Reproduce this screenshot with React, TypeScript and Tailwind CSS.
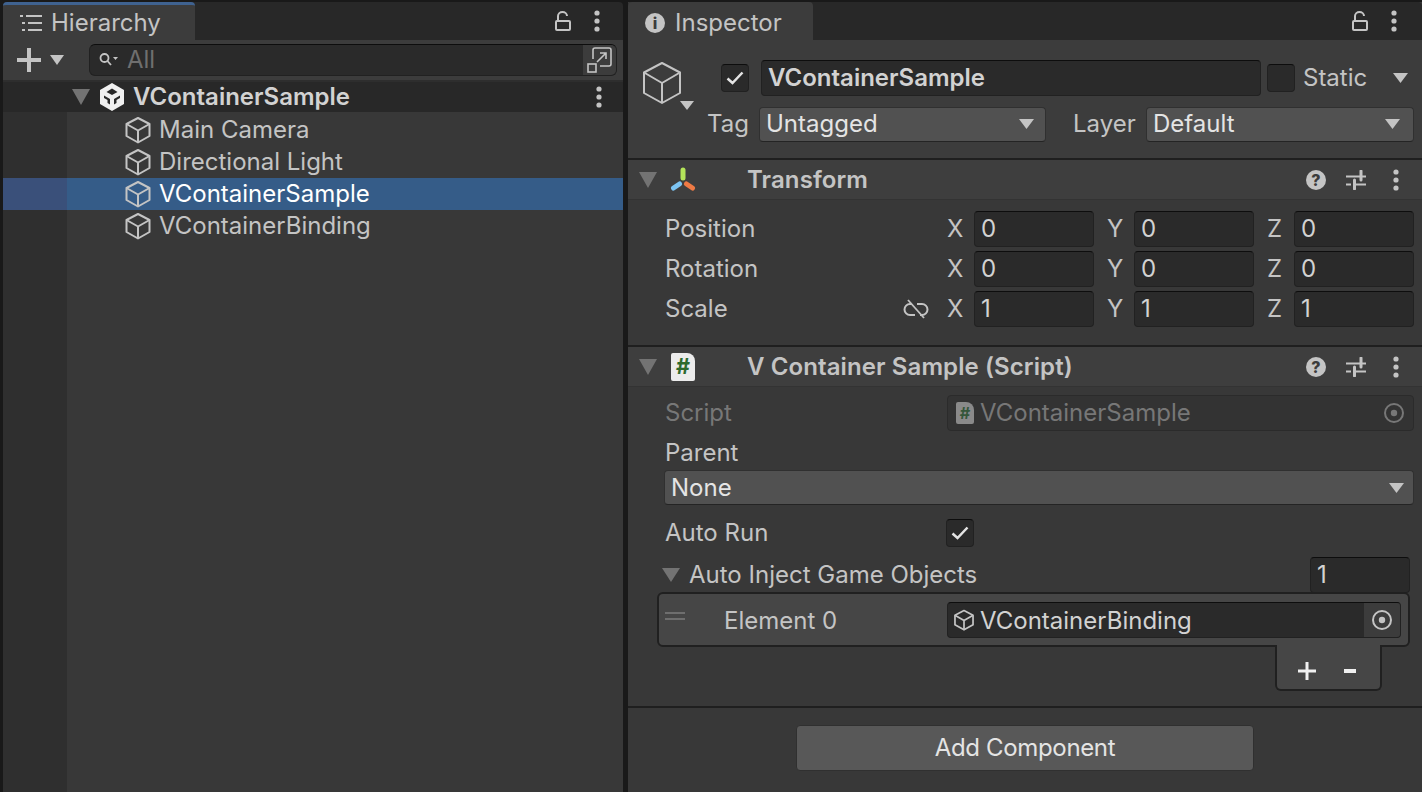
const Triangle = ({ className }: { className: string }) => (
  <svg viewBox="0 0 18 16" preserveAspectRatio="none" className={className}>
    <path d="M0 0H18L9 16Z" fill="currentColor" />
  </svg>
);

const Cube = ({ size = 28, sw = 2 }: { size?: number; sw?: number }) => (
  <svg width={size} height={size} viewBox="0 0 28 28" fill="none" stroke="#c4c4c4" strokeWidth={sw} strokeLinejoin="round" className="shrink-0">
    <path d="M14 2 25.500 8v12L14 26.500 2.500 20V8Z" />
    <path d="M2.500 8 14 14.500 25.500 8M14 14.500V26.500" />
  </svg>
);

const Kebab = () => (
  <svg width="6" height="22" viewBox="0 0 6 22" fill="#c4c4c4" className="shrink-0">
    <circle cx="3" cy="3" r="2.600" />
    <circle cx="3" cy="11" r="2.600" />
    <circle cx="3" cy="19" r="2.600" />
  </svg>
);

const Lock = () => (
  <svg width="16" height="20" viewBox="0 0 16 20" fill="none" stroke="#c4c4c4" strokeWidth="2" className="shrink-0">
    <rect x="1" y="10" width="14" height="9" rx="1" />
    <path d="M3 10V5a4.500 4 0 0 1 9 0" />
  </svg>
);

const Help = () => (
  <div className="w-5 h-5 rounded-full bg-[#c4c4c4] text-[#3c3c3c] text-[16px] font-extrabold leading-5 text-center shrink-0">?</div>
);

const Sliders = () => (
  <svg width="20" height="20" viewBox="0 0 20 20" stroke="#c4c4c4" className="shrink-0">
    <path d="M0 6.500H20M0 14.500H5M8 14.500H20" strokeWidth="2" />
    <path d="M15 1V10M8.500 10V19" strokeWidth="3" strokeLinecap="round" />
  </svg>
);

const Target = ({ size = 20, color = "#c4c4c4" }: { size?: number; color?: string }) => (
  <svg width={size} height={size} viewBox="0 0 20 20" fill="none" className="shrink-0">
    <circle cx="10" cy="10" r="9" stroke={color} strokeWidth="2" />
    <circle cx="10" cy="10" r="3.200" fill={color} />
  </svg>
);

const ScriptIcon = ({ size = 24, dim = false }: { size?: number; dim?: boolean }) => (
  <div
    className={`flex items-center justify-center shrink-0 rounded-br-[2px] rounded-l-[2px] rounded-tr-[8px] font-bold ${dim ? "bg-[#8a8a8a] text-[#35573a]" : "bg-[#ececec] text-[#2d6a2e]"}`}
    style={{ width: size, height: size + 4, fontSize: size * 0.9 }}
  >
    #
  </div>
);

const Check = () => (
  <svg width="18" height="14" viewBox="0 0 18 14" fill="none" stroke="#e4e4e4" strokeWidth="2.500">
    <path d="M1.500 7.500 6.500 12 16.500 1.500" />
  </svg>
);

const Field = ({ children, className = "" }: { children?: React.ReactNode; className?: string }) => (
  <div className={`flex items-center bg-[#2a2a2a] border border-[#212121] border-t-[#0d0d0d] rounded-[4px] text-[#d2d2d2] ${className}`}>
    {children}
  </div>
);

const Dropdown = ({ value, className = "" }: { value: string; className?: string }) => (
  <div className={`flex items-center justify-between bg-[#515151] border border-[#303030] border-b-[#242424] rounded-[4px] pl-[6px] text-[#e4e4e4] ${className}`}>
    <span>{value}</span>
    <Triangle className="w-[15px] h-[10px] text-[#c4c4c4]" />
  </div>
);

const Axis = ({ name, value }: { name: string; value: string }) => (
  <div className="flex items-center">
    <span className="w-[28px] pl-[1px] text-[#c4c4c4]">{name}</span>
    <Field className="w-[120px] h-[36px] pl-[6px]">{value}</Field>
  </div>
);

const VectorRow = ({ label, value, unlink }: { label: string; value: string; unlink?: boolean }) => (
  <div className="flex items-center h-[40px] pl-[37px] pr-[8px]">
    <span className="flex-1 text-[#c4c4c4]">{label}</span>
    {unlink && (
      <svg width="26" height="20" viewBox="0 0 26 20" fill="none" stroke="#c4c4c4" strokeWidth="2" className="mr-[17px]">
        <path d="M9 5H7a4.500 4.500 0 0 0 0 11h5M14 5h5a4.500 4.500 0 0 1 0 11h-2" />
        <path d="M5 1l16 18" strokeWidth="1.800" />
      </svg>
    )}
    <div className="flex gap-[12px]">
      <Axis name="X" value={value} />
      <Axis name="Y" value={value} />
      <Axis name="Z" value={value} />
    </div>
  </div>
);

const ComponentHeader = ({ icon, title }: { icon: React.ReactNode; title: string }) => (
  <div className="flex items-center h-[40px] bg-[#3e3e3e] border-b border-[#333333] pl-[11px] pr-[23px]">
    <Triangle className="w-[18px] h-[16px] text-[#737373]" />
    <div className="w-[24px] flex justify-center ml-[14px]">{icon}</div>
    <span className="ml-[52px] flex-1 pt-[1px] tracking-[0.1px] font-semibold text-[#c4c4c4]">{title}</span>
    <div className="flex items-center">
      <Help />
      <div className="ml-[20px]"><Sliders /></div>
      <div className="ml-[27px]"><Kebab /></div>
    </div>
  </div>
);

const TransformIcon = () => (
  <svg width="26" height="26" viewBox="0 0 26 26" strokeWidth="5" strokeLinecap="round" className="shrink-0">
    <path d="M13 3V11" stroke="#b4e45a" />
    <path d="M9.500 17 3.500 21" stroke="#7cc4f2" />
    <path d="M16.500 17 22.500 21" stroke="#ee7a45" />
  </svg>
);

const rows = ["Main Camera", "Directional Light", "VContainerSample", "VContainerBinding"];

export default function App() {
  return (
    <div
      className="flex w-[1422px] h-[792px] overflow-hidden bg-[#191919] pt-[2px] pl-[3px] gap-[5px] text-[24px] leading-none"
      style={{ fontFamily: "Inter, 'Noto Sans', sans-serif" }}
    >
      {/* Hierarchy */}
      <div className="w-[620px] shrink-0 flex flex-col">
        <div className="flex h-[38px] bg-[#282828] rounded-t-[4px]">
          <div className="flex items-center w-[192px] bg-[#3c3c3c] border-t-[3px] border-[#3f6290] rounded-t-[4px] pl-[17px]">
            <svg width="22" height="20" viewBox="0 0 22 20" stroke="#c4c4c4" strokeWidth="2" className="shrink-0">
              <path d="M6 3H22M8 10H22M8 17H22M0 3H3M2 10H5M2 17H5" />
            </svg>
            <span className="ml-[9px] text-[#c4c4c4]">Hierarchy</span>
          </div>
          <div className="flex-1 flex items-center justify-end pr-[23px] gap-[23px]">
            <Lock />
            <Kebab />
          </div>
        </div>
        <div className="flex items-center h-[40px] bg-[#3c3c3c] pl-[14px] pr-[6px]">
          <svg width="24" height="24" viewBox="0 0 24 24" fill="#c4c4c4" className="shrink-0">
            <path d="M10 0h4v10h10v4H14v10h-4V14H0v-4h10Z" />
          </svg>
          <Triangle className="w-[14px] h-[10px] ml-[9px] text-[#c4c4c4]" />
          <div className="flex-1 flex items-center h-[32px] ml-[25px] bg-[#2a2a2a] border border-[#212121] border-t-[#0d0d0d] rounded-[6px] overflow-hidden">
            <svg width="20" height="16" viewBox="0 0 20 16" fill="none" stroke="#c4c4c4" strokeWidth="1.800" className="ml-[9px] shrink-0">
              <circle cx="5.500" cy="6" r="4" />
              <path d="M8.500 9 12 13" />
              <path d="M14 5h5l-2.500 3Z" fill="#c4c4c4" stroke="none" />
            </svg>
            <span className="flex-1 ml-[8px] text-[#6f6f6f]">All</span>
            <div className="flex items-center justify-center w-[33px] h-full bg-[#3c3c3c]">
              <svg width="26" height="26" viewBox="0 0 26 26" fill="none" stroke="#c4c4c4" strokeWidth="1.600" className="shrink-0">
                <path d="M6 12V3a2 2 0 0 1 2-2h14a2 2 0 0 1 2 2v14a2 2 0 0 1-2 2h-9" />
                <rect x="1" y="17" width="8" height="8" />
                <path d="M10 15 19 6M13 6h6v6" />
              </svg>
            </div>
          </div>
        </div>
        <div className="flex items-center h-[32px] bg-[#282828] border-t-2 border-[#2e2e2e] pl-[69px] pr-[21px] font-semibold text-[#d2d2d2]">
          <Triangle className="w-[18px] h-[16px] text-[#737373]" />
          <svg width="26" height="28" viewBox="0 0 26 28" className="ml-[9px] shrink-0">
            <path d="M13 0 25 7V21L13 28 1 21V7Z" fill="#f0f0f0" />
            <path d="M13 5.500 18.500 9 13 12 7.500 9Z" fill="#282828" />
            <path d="M5 12.500 11 16V21.500L8.500 20V17L5 15Z" fill="#282828" />
            <path d="M21 12.500 15 16V21.500L17.500 20V17L21 15Z" fill="#282828" />
          </svg>
          <span className="ml-[8px] flex-1">VContainerSample</span>
          <Kebab />
        </div>
        <div className="flex-1 flex flex-col bg-[#383838]">
          <div className="h-[2px] bg-[#2f2f2f] w-[64px]" />
          {rows.map((name, i) => {
            const selected = i === 2;
            return (
              <div key={name} className={`flex h-[32px] ${selected ? "bg-[#355c88]" : ""}`}>
                <div className={`w-[64px] ${selected ? "bg-[#3a507a]" : "bg-[#2f2f2f]"}`} />
                <div className={`flex items-center pl-[57px] ${selected ? "text-white" : "text-[#c4c4c4]"}`}>
                  <Cube />
                  <span className="ml-[7px]">{name}</span>
                </div>
              </div>
            );
          })}
          <div className="flex-1 w-[64px] bg-[#2f2f2f]" />
        </div>
      </div>

      {/* Inspector */}
      <div className="flex-1 min-w-0 flex flex-col bg-[#383838]">
        <div className="flex h-[38px] bg-[#282828] rounded-t-[4px]">
          <div className="flex items-center w-[185px] bg-[#3c3c3c] rounded-t-[4px] pt-[3px] pl-[17px]">
            <div className="w-5 h-5 rounded-full bg-[#c4c4c4] text-[#3c3c3c] text-[16px] font-extrabold leading-5 text-center shrink-0">i</div>
            <span className="ml-[10px] text-[#c4c4c4]">Inspector</span>
          </div>
          <div className="flex-1 flex items-center justify-end pr-[25px] gap-[23px]">
            <Lock />
            <Kebab />
          </div>
        </div>

        <div className="flex h-[120px] bg-[#3c3c3c] border-b-2 border-[#1f1f1f] pl-[14px] pr-[8px]">
          <div className="relative w-[52px] pt-[22px] shrink-0">
            <svg width="40" height="42" viewBox="0 0 40 42" fill="none" stroke="#c4c4c4" strokeWidth="2" strokeLinejoin="round">
              <path d="M20 1 38 10.500V31L20 41 2 31V10.500Z" />
              <path d="M2 10.500 20 21 38 10.500M20 21V41" />
            </svg>
            <Triangle className="absolute left-[38px] top-[61px] w-[14px] h-[9px] text-[#c4c4c4]" />
          </div>
          <div className="flex-1 flex flex-col pt-[20px]">
            <div className="flex items-center h-[36px]">
              <Field className="w-[28px] h-[28px] ml-[27px] justify-center">
                <Check />
              </Field>
              <Field className="w-[500px] h-[36px] ml-[12px] pl-[6px] font-semibold">VContainerSample</Field>
              <Field className="w-[28px] h-[28px] ml-[6px]" />
              <span className="ml-[8px] flex-1 text-[#c4c4c4]">Static</span>
              <Triangle className="w-[15px] h-[10px] text-[#c4c4c4] mr-[6px]" />
            </div>
            <div className="flex items-center h-[36px] mt-[10px] text-[#c4c4c4]">
              <span className="ml-[13px] w-[52px]">Tag</span>
              <Dropdown value="Untagged" className="w-[287px] h-[35px] pr-[11px]" />
              <span className="ml-[27px] w-[73px]">Layer</span>
              <Dropdown value="Default" className="w-[268px] h-[35px] pr-[13px]" />
            </div>
          </div>
        </div>

        <ComponentHeader icon={<TransformIcon />} title="Transform" />
        <div className="flex flex-col h-[147px] pt-[9px] border-b-2 border-[#1f1f1f]">
          <VectorRow label="Position" value="0" />
          <VectorRow label="Rotation" value="0" />
          <VectorRow label="Scale" value="1" unlink />
        </div>

        <ComponentHeader icon={<ScriptIcon />} title="V Container Sample (Script)" />
        <div className="flex flex-col h-[321px] border-b-2 border-[#1f1f1f] pt-[8px]">
          <div className="flex items-center h-[36px] pl-[37px] pr-[8px]">
            <span className="w-[282px] text-[#777777]">Script</span>
            <div className="flex-1 flex items-center h-[36px] bg-[#333333] border border-[#2b2b2b] rounded-[4px] pl-[8px] pr-[9px] text-[#777777]">
              <ScriptIcon size={18} dim />
              <span className="flex-1 ml-[6px]">VContainerSample</span>
              <Target color="#777777" />
            </div>
          </div>
          <div className="h-[39px] flex items-end pb-[5px] pl-[37px] text-[#c4c4c4]">Parent</div>
          <div className="pl-[36px] pr-[8px]">
            <Dropdown value="None" className="h-[35px] pr-[9px]" />
          </div>
          <div className="flex items-center h-[56px] pl-[37px]">
            <span className="w-[281px] text-[#c4c4c4]">Auto Run</span>
            <Field className="w-[28px] h-[28px] justify-center">
              <Check />
            </Field>
          </div>
          <div className="flex items-center h-[28px] pl-[34px] pr-[12px] text-[#c4c4c4]">
            <Triangle className="w-[18px] h-[14px] text-[#737373]" />
            <span className="flex-1 ml-[9px]">Auto Inject Game Objects</span>
            <Field className="w-[100px] h-[36px] pl-[6px]">1</Field>
          </div>
          <div className="flex items-center h-[55px] ml-[29px] mr-[12px] mt-[3px] pt-[3px] bg-[#464646] border-2 border-[#202020] rounded-[6px] pl-[6px] pr-[7px] text-[#c4c4c4]">
            <div className="flex flex-col gap-[4px] w-[20px] shrink-0 -mt-[10px]">
              <div className="h-[2px] bg-[#6e6e6e]" />
              <div className="h-[2px] bg-[#6e6e6e]" />
            </div>
            <span className="ml-[39px] w-[223px]">Element 0</span>
            <Field className="flex-1 h-[36px] -mt-[3px] pl-[5px] overflow-hidden">
              <Cube size={22} sw={2.200} />
              <span className="flex-1 ml-[5px] pt-[2px]">VContainerBinding</span>
              <div className="flex items-center justify-center w-[36px] h-full bg-[#3c3c3c]">
                <Target />
              </div>
            </Field>
          </div>
          <div className="flex justify-end pr-[40px]">
            <div className="flex items-center justify-center gap-[28px] w-[107px] h-[46px] -mt-[2px] pt-[8px] pr-[4px] bg-[#464646] border-2 border-t-0 border-[#202020] rounded-b-[6px]">
              <svg width="18" height="18" viewBox="0 0 18 18" fill="#f0f0f0"><path d="M7.500 0h3v7.500H18v3h-7.500V18h-3v-7.500H0v-3h7.500Z" /></svg>
              <svg width="12" height="4" viewBox="0 0 12 4" fill="#f0f0f0"><path d="M0 0h12v4H0Z" /></svg>
            </div>
          </div>
        </div>

        <div className="flex-1 flex justify-center pt-[17px] pl-[6px] pr-[6px]">
          <div className="flex items-center justify-center w-[458px] h-[46px] bg-[#585858] border border-[#303030] rounded-[4px] tracking-[-0.35px] text-[#e4e4e4]">
            Add Component
          </div>
        </div>
      </div>
    </div>
  );
}
